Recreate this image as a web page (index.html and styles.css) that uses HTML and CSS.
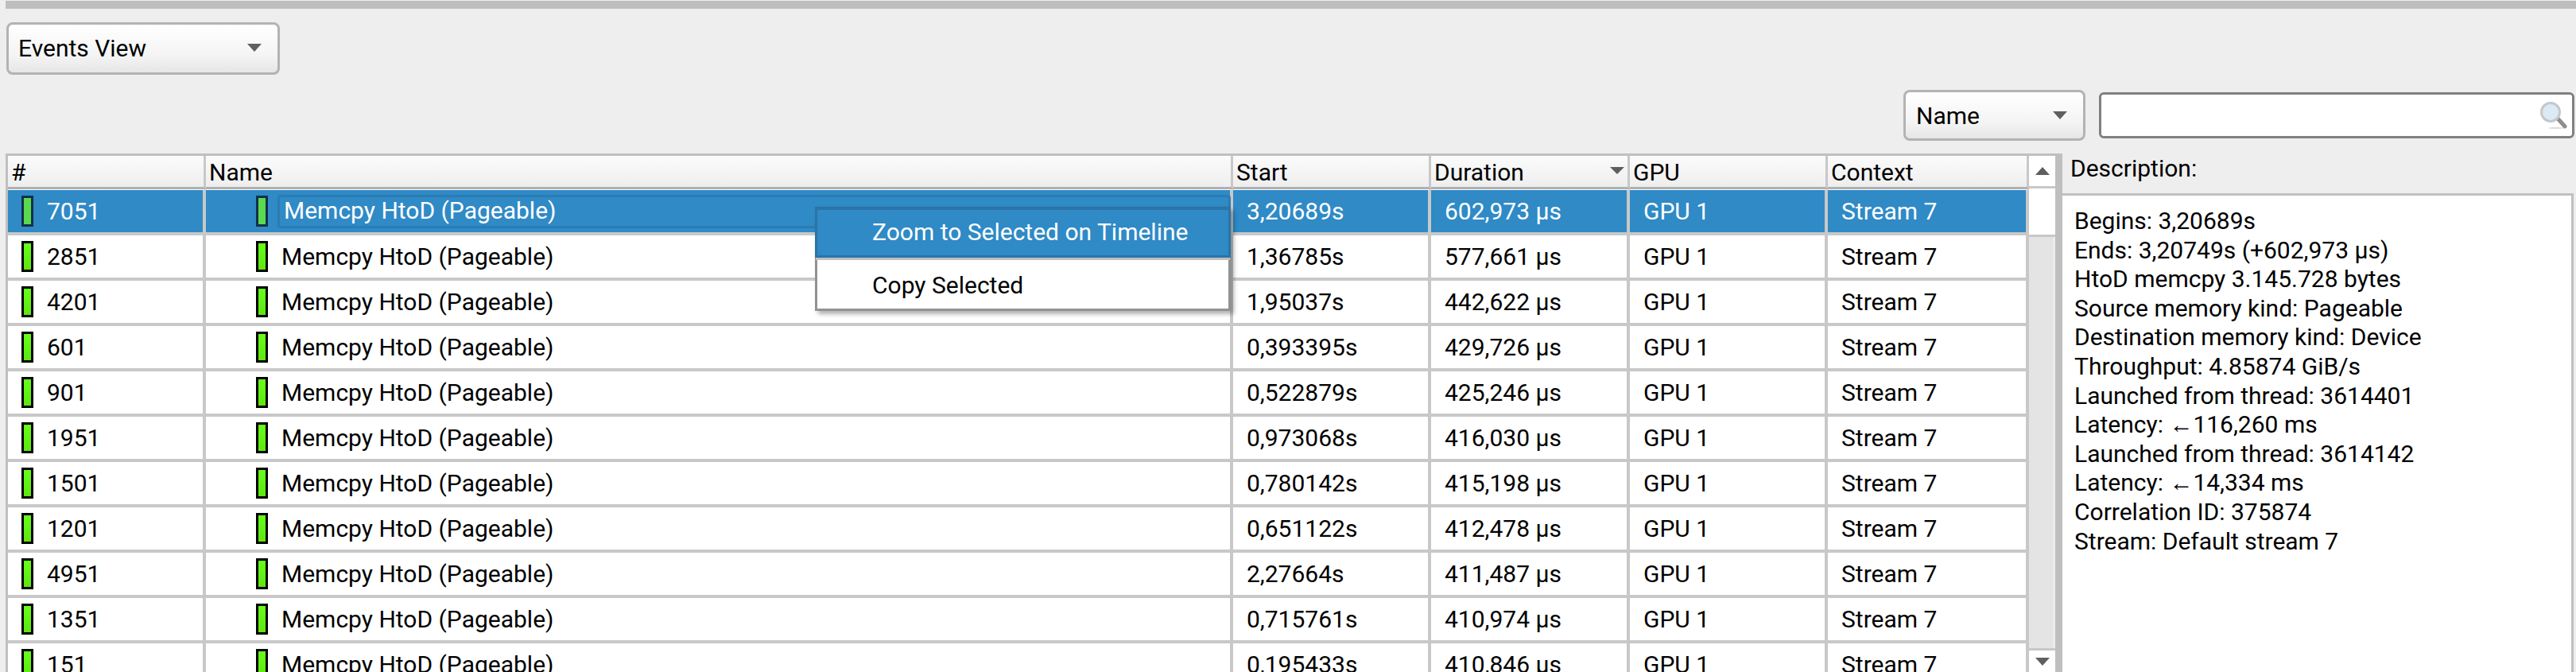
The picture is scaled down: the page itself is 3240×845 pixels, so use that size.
FILE: index.html
```html
<!DOCTYPE html>
<html lang="en">
<head>
    <meta charset="UTF-8">
    <title>Events View</title>
    <link rel="stylesheet" href="styles.css">
</head>
<body>
    <div class="topbar"></div>

    <div class="view-row">
        <div class="combo combo-view">
            <span>Events View</span>
            <span class="arrow"></span>
        </div>
    </div>

    <div class="filter-row">
        <div class="combo combo-field">
            <span>Name</span>
            <span class="arrow"></span>
        </div>
        <div class="search">
            <svg class="search-icon" width="38" height="38" viewBox="0 0 38 38">
                <ellipse cx="23" cy="35" rx="10" ry="1.2" fill="#dddddd"/>
                <path d="M25 23 L34 33" stroke="#8e8e8e" stroke-width="5" stroke-linecap="round"/>
                <circle cx="16" cy="15" r="11.5" fill="#dce9f7" stroke="#c4c8cc" stroke-width="3"/>
            </svg>
        </div>
    </div>

    <div class="main">
        <div class="events">
            <table class="event-table">
                <colgroup>
                    <col class="c-num"><col class="c-name"><col class="c-start"><col class="c-dur"><col class="c-gpu"><col class="c-ctx">
                </colgroup>
                <thead>
                    <tr>
                        <th>#</th>
                        <th>Name</th>
                        <th>Start</th>
                        <th><div class="sort-head">Duration<span class="arrow arrow-small"></span></div></th>
                        <th>GPU</th>
                        <th>Context</th>
                    </tr>
                </thead>
                <tbody>
                    <tr class="selected">
                        <td><div class="num-cell"><span class="mark"></span>7051</div></td>
                        <td><div class="name-cell"><span class="mark"></span><span class="name-focus">Memcpy HtoD (Pageable)</span></div></td>
                        <td>3,20689s</td><td>602,973 µs</td><td>GPU 1</td><td>Stream 7</td>
                    </tr>
                    <tr>
                        <td><div class="num-cell"><span class="mark"></span>2851</div></td>
                        <td><div class="name-cell"><span class="mark"></span><span>Memcpy HtoD (Pageable)</span></div></td>
                        <td>1,36785s</td><td>577,661 µs</td><td>GPU 1</td><td>Stream 7</td>
                    </tr>
                    <tr>
                        <td><div class="num-cell"><span class="mark"></span>4201</div></td>
                        <td><div class="name-cell"><span class="mark"></span><span>Memcpy HtoD (Pageable)</span></div></td>
                        <td>1,95037s</td><td>442,622 µs</td><td>GPU 1</td><td>Stream 7</td>
                    </tr>
                    <tr>
                        <td><div class="num-cell"><span class="mark"></span>601</div></td>
                        <td><div class="name-cell"><span class="mark"></span><span>Memcpy HtoD (Pageable)</span></div></td>
                        <td>0,393395s</td><td>429,726 µs</td><td>GPU 1</td><td>Stream 7</td>
                    </tr>
                    <tr>
                        <td><div class="num-cell"><span class="mark"></span>901</div></td>
                        <td><div class="name-cell"><span class="mark"></span><span>Memcpy HtoD (Pageable)</span></div></td>
                        <td>0,522879s</td><td>425,246 µs</td><td>GPU 1</td><td>Stream 7</td>
                    </tr>
                    <tr>
                        <td><div class="num-cell"><span class="mark"></span>1951</div></td>
                        <td><div class="name-cell"><span class="mark"></span><span>Memcpy HtoD (Pageable)</span></div></td>
                        <td>0,973068s</td><td>416,030 µs</td><td>GPU 1</td><td>Stream 7</td>
                    </tr>
                    <tr>
                        <td><div class="num-cell"><span class="mark"></span>1501</div></td>
                        <td><div class="name-cell"><span class="mark"></span><span>Memcpy HtoD (Pageable)</span></div></td>
                        <td>0,780142s</td><td>415,198 µs</td><td>GPU 1</td><td>Stream 7</td>
                    </tr>
                    <tr>
                        <td><div class="num-cell"><span class="mark"></span>1201</div></td>
                        <td><div class="name-cell"><span class="mark"></span><span>Memcpy HtoD (Pageable)</span></div></td>
                        <td>0,651122s</td><td>412,478 µs</td><td>GPU 1</td><td>Stream 7</td>
                    </tr>
                    <tr>
                        <td><div class="num-cell"><span class="mark"></span>4951</div></td>
                        <td><div class="name-cell"><span class="mark"></span><span>Memcpy HtoD (Pageable)</span></div></td>
                        <td>2,27664s</td><td>411,487 µs</td><td>GPU 1</td><td>Stream 7</td>
                    </tr>
                    <tr>
                        <td><div class="num-cell"><span class="mark"></span>1351</div></td>
                        <td><div class="name-cell"><span class="mark"></span><span>Memcpy HtoD (Pageable)</span></div></td>
                        <td>0,715761s</td><td>410,974 µs</td><td>GPU 1</td><td>Stream 7</td>
                    </tr>
                    <tr>
                        <td><div class="num-cell"><span class="mark"></span>151</div></td>
                        <td><div class="name-cell"><span class="mark"></span><span>Memcpy HtoD (Pageable)</span></div></td>
                        <td>0,195433s</td><td>410,846 µs</td><td>GPU 1</td><td>Stream 7</td>
                    </tr>
                </tbody>
            </table>

            <div class="context-menu">
                <div class="menu-item menu-active">Zoom to Selected on Timeline</div>
                <div class="menu-item menu-plain">Copy Selected</div>
            </div>
        </div>

        <div class="scrollbar">
            <div class="scroll-btn scroll-up"><span class="arrow arrow-up"></span></div>
            <div class="scroll-thumb"></div>
            <div class="scroll-track"></div>
            <div class="scroll-btn scroll-down"><span class="arrow"></span></div>
        </div>

        <div class="splitter"></div>

        <div class="details">
            <div class="details-title">Description:</div>
            <div class="details-box">
                <div>Begins: 3,20689s</div>
                <div>Ends: 3,20749s (+602,973 µs)</div>
                <div>HtoD memcpy 3.145.728 bytes</div>
                <div>Source memory kind: Pageable</div>
                <div>Destination memory kind: Device</div>
                <div>Throughput: 4.85874 GiB/s</div>
                <div>Launched from thread: 3614401</div>
                <div>Latency: <span class="back-arrow">←</span>116,260 ms</div>
                <div>Launched from thread: 3614142</div>
                <div>Latency: <span class="back-arrow">←</span>14,334 ms</div>
                <div>Correlation ID: 375874</div>
                <div>Stream: Default stream 7</div>
            </div>
        </div>
    </div>
</body>
</html>
```

FILE: styles.css
```css
html, body {
    margin: 0;
    height: 845px;
    overflow: hidden;
}
body {
    background-color: #eeeeee;
    font-family: Roboto, "Liberation Sans", sans-serif;
    font-size: 30px;
    color: #000;
}
* {
    box-sizing: border-box;
}

.topbar {
    height: 10px;
    margin: 1px 0 0 7px;
    background-color: #bebebe;
}

.view-row {
    padding: 17px 0 0 8px;
    height: 103px;
}
.combo {
    display: flex;
    align-items: center;
    justify-content: space-between;
    border: 3px solid #b3b3b3;
    border-radius: 8px;
    background: linear-gradient(#ffffff, #f4f4f4 65%, #e6e6e6);
}
.combo-view {
    width: 344px;
    height: 66px;
    padding: 0 20px 2px 12px;
}
.combo-field {
    width: 229px;
    height: 64px;
    padding: 0 20px 0 13px;
}
.arrow {
    width: 0;
    height: 0;
    border-left: 9px solid transparent;
    border-right: 9px solid transparent;
    border-top: 10px solid #5f5f5f;
}
.arrow-small {
    border-top-width: 9px;
    margin-top: -6px;
}
.arrow-up {
    border-top: none;
    border-bottom: 10px solid #5f5f5f;
}

.filter-row {
    display: flex;
    align-items: center;
    justify-content: flex-end;
    gap: 17px;
    height: 64px;
    margin-top: -1px;
    padding-right: 2px;
}
.search {
    display: flex;
    align-items: center;
    justify-content: flex-end;
    width: 598px;
    height: 58px;
    padding-right: 5px;
    border: 3px solid #808080;
    border-radius: 6px;
    background-color: #fff;
}
.search-icon {
    filter: blur(0.6px);
}

.main {
    display: flex;
    height: 652px;
    margin-top: 16px;
    padding-left: 7px;
    align-items: stretch;
}

.events {
    position: relative;
    width: 2545px;
    flex: none;
    border-top: 3px solid #c0c0c0;
    border-left: 3px solid #c0c0c0;
    background-color: #fff;
}
.event-table {
    table-layout: fixed;
    width: 2542px;
    border-collapse: separate;
    border-spacing: 0;
}
.c-num { width: 249px; }
.c-name { width: 1292px; }
.c-start { width: 249px; }
.c-dur { width: 250px; }
.c-gpu { width: 249px; }
.c-ctx { width: 253px; }

th {
    height: 41px;
    padding: 3px 4px 0;
    text-align: left;
    font-weight: normal;
    line-height: 36px;
    background: linear-gradient(#fbfbfb, #eeeeee);
    border-right: 3px solid #c8c8c8;
    border-bottom: 3px solid #b0b0b0;
}
.sort-head {
    display: flex;
    align-items: center;
    justify-content: space-between;
    padding-right: 0;
}
td {
    height: 57px;
    padding: 0 0 0 17px;
    border-right: 4px solid #c8c8c8;
    border-bottom: 4px solid #c8c8c8;
    white-space: nowrap;
}
.mark {
    flex: none;
    width: 15px;
    height: 39px;
    border: 3px solid #000;
    background: linear-gradient(#66ff1a, #5ee60f);
}
.num-cell {
    display: flex;
    align-items: center;
    gap: 17px;
}
.name-cell {
    display: flex;
    align-items: center;
    gap: 12px;
    padding-left: 46px;
}
.name-cell span:last-child {
    padding-left: 5px;
}
.name-cell .name-focus {
    padding-left: 2px;
}

.selected td {
    height: 58px;
    border-top: 1px solid #fff;
    background-color: #2f8ac6;
    color: #fff;
}
.selected .mark {
    border-color: #12304a;
    background: #5bd94f;
}
.name-focus {
    flex: 1;
    height: 42px;
    margin-right: -1px;
    border: 3px solid #2b7cb3;
    border-radius: 4px;
    line-height: 34px;
}

.context-menu {
    position: absolute;
    top: 64px;
    left: 1015px;
    width: 523px;
    height: 131px;
    border-right: 3px solid #929292;
    border-bottom: 3px solid #929292;
    border-left: 3px solid #929292;
    background-color: #fff;
    box-shadow: 4px 4px 5px rgba(0, 0, 0, 0.3);
}
.menu-item {
    height: 64px;
    padding-left: 69px;
}
.menu-active {
    margin: 0 -3px;
    padding-left: 69px;
    line-height: 56px;
    border: 3px solid #2b74a8;
    border-top-width: 4px;
    background-color: #2f8ac6;
    color: #fff;
    box-shadow: 0 4px 0 -1px #c0c0c0;
}
.menu-plain {
    line-height: 70px;
}

.scrollbar {
    display: flex;
    flex-direction: column;
    flex: none;
    width: 33px;
    border-top: 3px solid #c0c0c0;
    background-color: #ececec;
}
.scroll-btn {
    display: flex;
    align-items: center;
    justify-content: center;
    flex: none;
    background-color: #fff;
}
.scroll-up {
    height: 41px;
    border-bottom: 3px solid #c8c8c8;
}
.scroll-down {
    height: 30px;
    border-top: 3px solid #c8c8c8;
}
.scroll-thumb {
    height: 61px;
    flex: none;
    background-color: #fff;
    border-bottom: 3px solid #c8c8c8;
}
.scroll-track {
    flex: 1;
    background-color: #e4e4e4;
    border-right: 3px solid #ececec;
}

.splitter {
    flex: none;
    width: 9px;
    background-color: #bfbfbf;
}

.details {
    display: flex;
    flex-direction: column;
    flex: 1;
    margin-right: 3px;
}
.details-title {
    height: 50px;
    padding: 1px 0 0 10px;
    line-height: 36px;
}
.details-box {
    flex: 1;
    padding: 14px 0 0 15px;
    border-top: 3px solid #c0c0c0;
    border-right: 3px solid #c0c0c0;
    background-color: #fff;
    line-height: 36.6px;
}
.back-arrow {
    font-family: "Liberation Sans", sans-serif;
}
```
